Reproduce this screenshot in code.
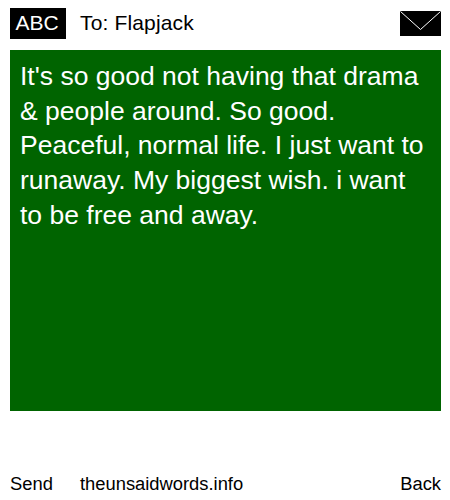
<div class="page">
  <header class="top">
    <span class="abc">ABC</span>
    <span class="to">To: Flapjack</span>
    <svg class="env" width="41" height="25" viewBox="0 0 41 25" aria-hidden="true">
      <rect width="41" height="25" fill="#000" />
      <path d="M0.5 0.5 L20.5 18.5 L40.5 0.5" fill="none" stroke="#fff" stroke-width="1" />
    </svg>
  </header>
  <main class="msg">It's so good not having that drama &amp; people around. So good. Peaceful, normal life. I just want to runaway. My biggest wish. i want to be free and away.</main>
  <footer class="bottom">
    <span class="send">Send</span>
    <span class="site">theunsaidwords.info</span>
    <span class="back">Back</span>
  </footer>
</div>

<style>
  :global(body) {
    margin: 0;
    background: #fff;
  }
  .page {
    width: 450px;
    height: 500px;
    box-sizing: border-box;
    padding: 8px 9px 0 10px;
    font-family: "Liberation Sans", Arial, sans-serif;
    color: #000;
    display: flex;
    flex-direction: column;
  }
  .top {
    display: flex;
    align-items: center;
    height: 31px;
  }
  .abc {
    width: 56px;
    height: 31px;
    box-sizing: border-box;
    padding: 0 2px 0 0;
    background: #000;
    color: #fff;
    font-size: 21px;
    line-height: 30px;
    text-align: center;
  }
  .to {
    margin-left: 14px;
    padding-bottom: 1px;
    font-size: 21px;
    letter-spacing: 0.15px;
    flex: 1;
  }
  .env {
    display: block;
  }
  .msg {
    margin-top: 11px;
    height: 361px;
    box-sizing: border-box;
    padding: 9px 10px;
    background: #006400;
    color: #fff;
    font-size: 26.5px;
    line-height: 34.7px;
  }
  .bottom {
    margin-top: 62px;
    display: flex;
    font-size: 18.35px;
    line-height: 22px;
  }
  .send {
    width: 70px;
  }
  .site {
    flex: 1;
  }
</style>
